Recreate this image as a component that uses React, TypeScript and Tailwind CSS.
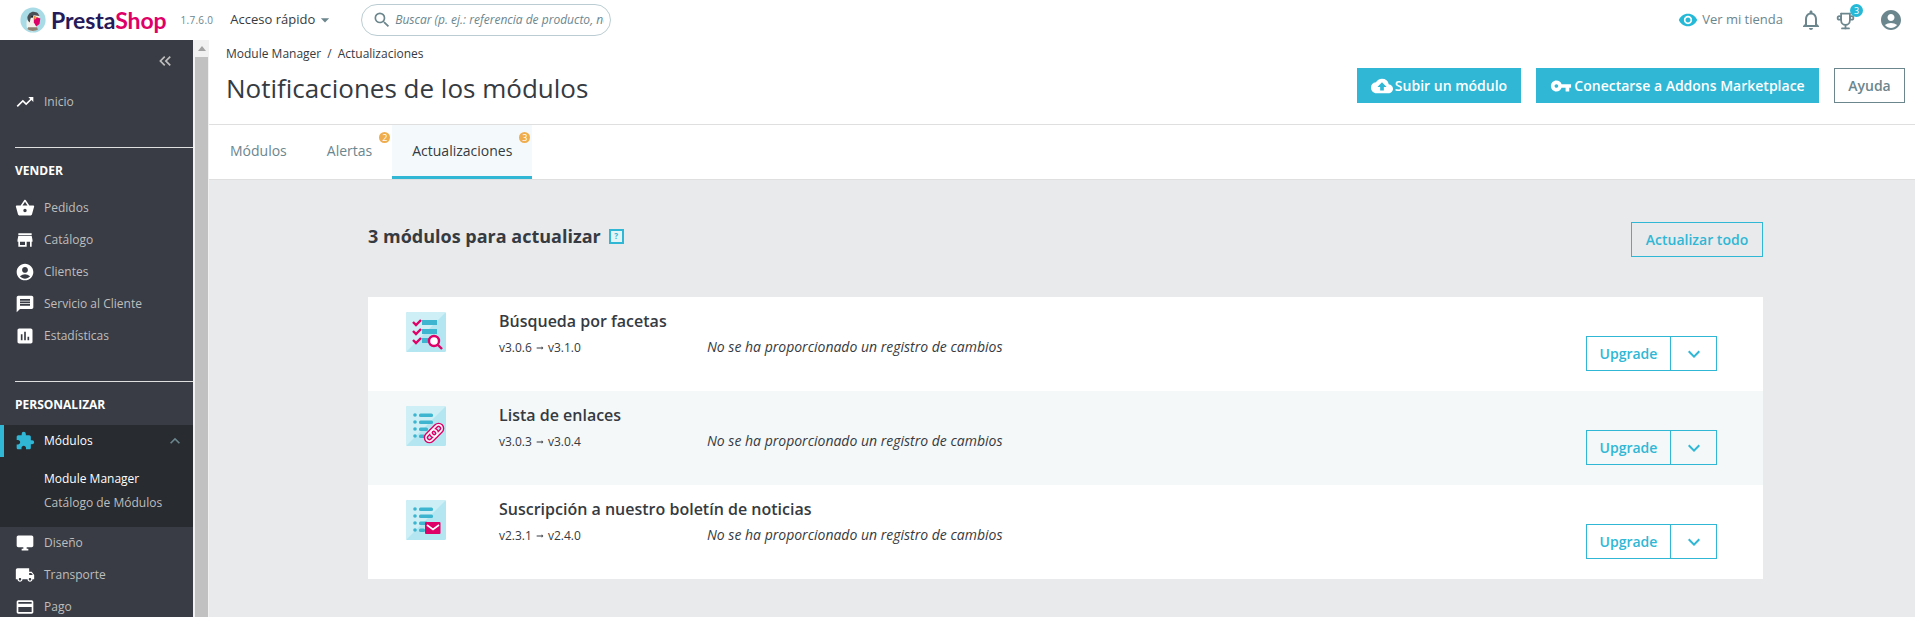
import React from 'react';
import {
  MdTrendingUp,
  MdShoppingBasket,
  MdStore,
  MdAccountCircle,
  MdMessage,
  MdAssessment,
  MdExtension,
  MdDesktopWindows,
  MdLocalShipping,
  MdCreditCard,
  MdExpandLess,
  MdExpandMore,
  MdVisibility,
  MdNotificationsNone,
  MdCloudUpload,
  MdVpnKey,
  MdSearch,
  MdArrowDropDown,
  MdArrowRightAlt,
  MdKeyboardDoubleArrowLeft,
} from 'react-icons/md';
import { TbTrophy } from 'react-icons/tb';

const Puffin = () => (
  <svg width="26" height="26" viewBox="0 0 32 32" className="shrink-0">
    <circle cx="16" cy="16" r="15.5" fill="#a8dbe6" />
    <path d="M9 27c-2-6-1-14 3-18 3-3 8-3 11 0 1 1 1 3 1 4l-3 8-1 7-5 2c-2 0-4-1-6-3z" fill="#f4f1ea" />
    <path d="M9 13c1-5 5-8 9-7 3 0 5 2 6 5l-7-1-4 4-1 5c-2-1-3-3-3-6z" fill="#4a4f55" />
    <path d="M17 11l8 3-1 7-4 3-3-5z" fill="#df0067" />
    <path d="M17 11l4 2-3 3z" fill="#f0a93a" />
    <circle cx="15" cy="12" r="1.2" fill="#222" />
    <path d="M9 27c3 3 9 3 13 1l-1-3H10z" fill="#8c8170" />
  </svg>
);

const Logo = () => (
  <div className="flex items-center gap-[5px]">
    <Puffin />
    <span className="font-['Lato',sans-serif] text-[23px] font-bold leading-none tracking-[-0.1px] text-[#251b5b]">
      Presta<span className="text-[#df0067]">Shop</span>
    </span>
  </div>
);

const TopBar = () => (
  <header className="flex h-10 items-center bg-white pl-[20px] pr-[12px] text-[#363a41]">
    <Logo />
    <span className="ml-[14px] text-[10px] tracking-[0.3px] text-[#6c868e]">1.7.6.0</span>
    <button className="ml-[17px] flex items-center text-[13px] text-[#363a41]">
      Acceso rápido
      <MdArrowDropDown className="text-[20px] text-[#6c868e]" />
    </button>
    <div className="ml-[26px] flex h-8 w-[250px] items-center overflow-hidden rounded-[16px] border border-[#bbcdd2] pl-[10px] pr-[6px]">
      <MdSearch className="shrink-0 text-[20px] text-[#6c868e]" />
      <span className="ml-[3px] overflow-hidden whitespace-nowrap text-[12px] italic text-[#6c868e]">
        Buscar (p. ej.: referencia de producto, nombre de cliente...)
      </span>
    </div>
    <div className="ml-auto flex items-center">
      <MdVisibility className="text-[20px] text-[#25b9d7]" />
      <span className="ml-[4px] text-[13px] text-[#6c868e]">Ver mi tienda</span>
      <MdNotificationsNone className="ml-[16px] text-[24px] text-[#6c868e]" />
      <div className="relative ml-[12px]">
        <TbTrophy className="text-[21px] text-[#6c868e]" />
        <span className="absolute -right-[7px] -top-[6px] flex h-[13px] w-[13px] items-center justify-center rounded-full bg-[#25b9d7] text-[9px] leading-none text-white">
          3
        </span>
      </div>
      <MdAccountCircle className="ml-[23px] text-[24px] text-[#6c868e]" />
    </div>
  </header>
);

type NavItem = { label: string; icon: React.ElementType };

const SideLink = ({ label, icon: Icon }: NavItem) => (
  <div className="flex h-8 items-center pl-[15px] text-[12px] text-[#bebebe]">
    <Icon className="w-[20px] text-[20px] text-white" />
    <span className="ml-[9px]">{label}</span>
  </div>
);

const SectionTitle = ({ children }: { children: React.ReactNode }) => (
  <div className="ml-[15px] flex h-[44px] items-center border-t border-[#dfdfdf] pt-[2px] text-[12px] font-bold text-white">
    {children}
  </div>
);

const Sidebar = () => (
  <aside className="w-[193px] shrink-0 overflow-hidden bg-[#393c44]">
    <div className="flex h-[46px] items-start justify-end pr-[18px] pt-[11px]">
      <MdKeyboardDoubleArrowLeft className="text-[20px] text-[#bebebe]" />
    </div>
    <SideLink label="Inicio" icon={MdTrendingUp} />
    <div className="mt-[29px]">
      <SectionTitle>VENDER</SectionTitle>
    </div>
    <div className="mt-[1px]">
      <SideLink label="Pedidos" icon={MdShoppingBasket} />
      <SideLink label="Catálogo" icon={MdStore} />
      <SideLink label="Clientes" icon={MdAccountCircle} />
      <SideLink label="Servicio al Cliente" icon={MdMessage} />
      <SideLink label="Estadísticas" icon={MdAssessment} />
    </div>
    <div className="mt-[29px]">
      <SectionTitle>PERSONALIZAR</SectionTitle>
    </div>
    <div className="bg-[#282b30] pb-[12px]">
      <div className="flex h-8 items-center border-l-4 border-[#2fb7d5] pl-[11px] pr-[8px] text-[12px] text-white">
        <MdExtension className="w-[20px] text-[20px] text-[#2fb7d5]" />
        <span className="ml-[9px]">Módulos</span>
        <MdExpandLess className="ml-auto text-[20px] text-[#6c868e]" />
      </div>
      <div className="mt-[10px] pl-[44px] text-[12px] leading-[24px]">
        <div className="text-white">Module Manager</div>
        <div className="text-[#bebebe]">Catálogo de Módulos</div>
      </div>
    </div>
    <SideLink label="Diseño" icon={MdDesktopWindows} />
    <SideLink label="Transporte" icon={MdLocalShipping} />
    <SideLink label="Pago" icon={MdCreditCard} />
  </aside>
);

const ScrollBar = () => (
  <div className="flex w-[16px] shrink-0 flex-col bg-[#f1f1f1] pl-[2px] pr-[1px]">
    <div className="flex h-[17px] items-center justify-center">
      <div className="h-0 w-0 border-x-[4px] border-b-[5px] border-x-transparent border-b-[#a3a3a3]" />
    </div>
    <div className="flex-1 bg-[#c1c1c1]" />
  </div>
);

const PageHead = () => (
  <div className="h-[85px] border-b border-[#dfdfdf] bg-white pl-[17px] pr-[10px]">
    <div className="flex h-[28px] items-center text-[12px] text-[#363a41]">
      Module Manager
      <span className="mx-[6px]">/</span>
      Actualizaciones
    </div>
    <div className="flex items-start justify-between">
      <h1 className="mt-[1px] text-[26px] font-normal leading-[38px] text-[#363a41]">
        Notificaciones de los módulos
      </h1>
      <div className="flex gap-[15px]">
        <button className="flex h-[35px] w-[164px] items-center justify-center bg-[#2fb7d5] text-[14px] font-semibold text-white">
          <MdCloudUpload className="mr-[2px] text-[22px]" />
          Subir un módulo
        </button>
        <button className="flex h-[35px] w-[283px] items-center justify-center bg-[#2fb7d5] text-[14px] font-semibold text-white">
          <MdVpnKey className="mr-[2px] text-[22px]" />
          Conectarse a Addons Marketplace
        </button>
        <button className="h-[35px] w-[71px] border border-[#6c868e] text-[14px] font-semibold text-[#6c868e]">
          Ayuda
        </button>
      </div>
    </div>
  </div>
);

const Tab = ({ label, badge, active }: { label: string; badge?: number; active?: boolean }) => (
  <div
    className={
      active
        ? 'relative flex h-[54px] items-center border-b-[3px] border-[#2fb7d5] bg-[#f4fafc] px-[20px] text-[14px] text-[#363a41]'
        : 'relative flex h-[54px] items-center border-b-[3px] border-transparent px-[20px] text-[14px] text-[#6c868e]'
    }
  >
    {label}
    {badge !== undefined && (
      <span className="absolute right-[2px] top-[7px] flex h-[11px] w-[11px] items-center justify-center rounded-full bg-[#f0ad4e] text-[9px] leading-none text-white">
        {badge}
      </span>
    )}
  </div>
);

const Tabs = () => (
  <div className="flex h-[55px] border-b border-[#dfdfdf] bg-white pl-[1px]">
    <Tab label="Módulos" />
    <Tab label="Alertas" badge={2} />
    <Tab label="Actualizaciones" badge={3} active />
  </div>
);

const IconBase = ({ children }: { children: React.ReactNode }) => (
  <svg width="40" height="40" viewBox="0 0 40 40" className="shrink-0">
    <rect width="40" height="40" rx="1.5" fill="#b3e6f0" />
    <path d="M0 40V1.5A1.5 1.5 0 0 1 1.5 0H40z" fill="#cdeff5" />
    {children}
  </svg>
);

const FilterIcon = () => (
  <IconBase>
    <g fill="none" stroke="#df0067" strokeWidth="2.4">
      <path d="M7 10l3 3 5-5M7 19l3 3 5-5M7 28l3 3 5-5" />
    </g>
    <rect x="16" y="8" width="15" height="5" fill="#3db5d0" />
    <rect x="16" y="17" width="15" height="5" fill="#3db5d0" />
    <rect x="16" y="26" width="9" height="5" fill="#3db5d0" />
    <circle cx="28" cy="29" r="5" fill="#fff" stroke="#df0067" strokeWidth="2.4" />
    <path d="M32 33l4 4" stroke="#df0067" strokeWidth="2.4" />
  </IconBase>
);

const ListLines = () => (
  <g fill="#3db5d0">
    <circle cx="9" cy="9" r="1.8" />
    <rect x="13" y="7.5" width="14" height="3.5" rx="1.5" />
    <circle cx="9" cy="16" r="1.8" />
    <rect x="13" y="14.5" width="14" height="3.5" rx="1.5" />
    <circle cx="9" cy="23" r="1.8" />
    <rect x="13" y="21.5" width="9" height="3.5" rx="1.5" />
    <circle cx="9" cy="30" r="1.8" />
    <rect x="13" y="28.5" width="6" height="3.5" rx="1.5" />
  </g>
);

const LinkIcon = () => (
  <IconBase>
    <ListLines />
    <g fill="none" transform="rotate(-45 28 27)">
      <rect x="18" y="23.5" width="13" height="7" rx="3.5" stroke="#df0067" strokeWidth="4.4" />
      <rect x="25" y="23.5" width="13" height="7" rx="3.5" stroke="#df0067" strokeWidth="4.4" />
      <rect x="18" y="23.5" width="13" height="7" rx="3.5" stroke="#fff" strokeWidth="1.6" />
      <rect x="25" y="23.5" width="13" height="7" rx="3.5" stroke="#fff" strokeWidth="1.6" />
    </g>
  </IconBase>
);

const MailIcon = () => (
  <IconBase>
    <ListLines />
    <rect x="19" y="22" width="15.5" height="12" rx="1" fill="#df0067" />
    <path d="M21 25l6 4.5 6-4.5" fill="none" stroke="#fff" strokeWidth="1.6" />
  </IconBase>
);

type ModuleRow = { name: string; from: string; to: string; icon: React.ReactNode };

const modules: ModuleRow[] = [
  { name: 'Búsqueda por facetas', from: 'v3.0.6', to: 'v3.1.0', icon: <FilterIcon /> },
  { name: 'Lista de enlaces', from: 'v3.0.3', to: 'v3.0.4', icon: <LinkIcon /> },
  { name: 'Suscripción a nuestro boletín de noticias', from: 'v2.3.1', to: 'v2.4.0', icon: <MailIcon /> },
];

const Row = ({ mod, shaded }: { mod: ModuleRow; shaded: boolean }) => (
  <div className={shaded ? 'flex h-[94px] bg-[#f4f8f9] pl-[38px] pr-[46px] pt-[15px]' : 'flex h-[94px] bg-white pl-[38px] pr-[46px] pt-[15px]'}>
    {mod.icon}
    <div className="ml-[53px] w-[208px] shrink-0">
      <div className="-mt-[2px] whitespace-nowrap text-[16px] font-semibold leading-[22px] text-[#363a41]">{mod.name}</div>
      <div className="mt-[7px] flex items-center text-[12px] leading-[18px] text-[#363a41]">
        {mod.from}
        <MdArrowRightAlt className="mx-[3px] text-[10px]" />
        {mod.to}
      </div>
    </div>
    <div className="mt-[25px] text-[14px] italic leading-[20px] text-[#363a41]">
      No se ha proporcionado un registro de cambios
    </div>
    <div className="ml-auto mt-[24px] flex h-[35px] border border-[#2fb7d5] text-[#2fb7d5]">
      <span className="flex w-[84px] items-center justify-center border-r border-[#2fb7d5] text-[14px] font-semibold">
        Upgrade
      </span>
      <span className="flex w-[45px] items-center justify-center">
        <MdExpandMore className="text-[24px]" />
      </span>
    </div>
  </div>
);

const Updates = () => (
  <div className="ml-[159px] w-[1395px] pt-[42px]">
    <div className="flex h-[75px] items-start justify-between">
      <div className="flex items-center pt-[2px]">
        <h2 className="text-[18px] font-bold leading-[24px] text-[#363a41]">3 módulos para actualizar</h2>
        <span className="ml-[8px] flex h-[15px] w-[15px] items-center justify-center border-2 border-[#2fb7d5] bg-[#e4f5f8] text-[8px] font-bold leading-none text-[#2fb7d5]">
          ?
        </span>
      </div>
      <button className="h-[35px] w-[132px] border border-[#2fb7d5] text-[14px] font-semibold text-[#2fb7d5]">
        Actualizar todo
      </button>
    </div>
    {modules.map((mod, i) => (
      <Row key={mod.name} mod={mod} shaded={i === 1} />
    ))}
  </div>
);

export default function App() {
  return (
    <div className="flex h-[617px] flex-col overflow-hidden bg-[#e9eaec] font-['Open_Sans',sans-serif]">
      <TopBar />
      <div className="flex min-h-0 flex-1">
        <Sidebar />
        <ScrollBar />
        <main className="min-w-0 flex-1">
          <PageHead />
          <Tabs />
          <Updates />
        </main>
      </div>
    </div>
  );
}
